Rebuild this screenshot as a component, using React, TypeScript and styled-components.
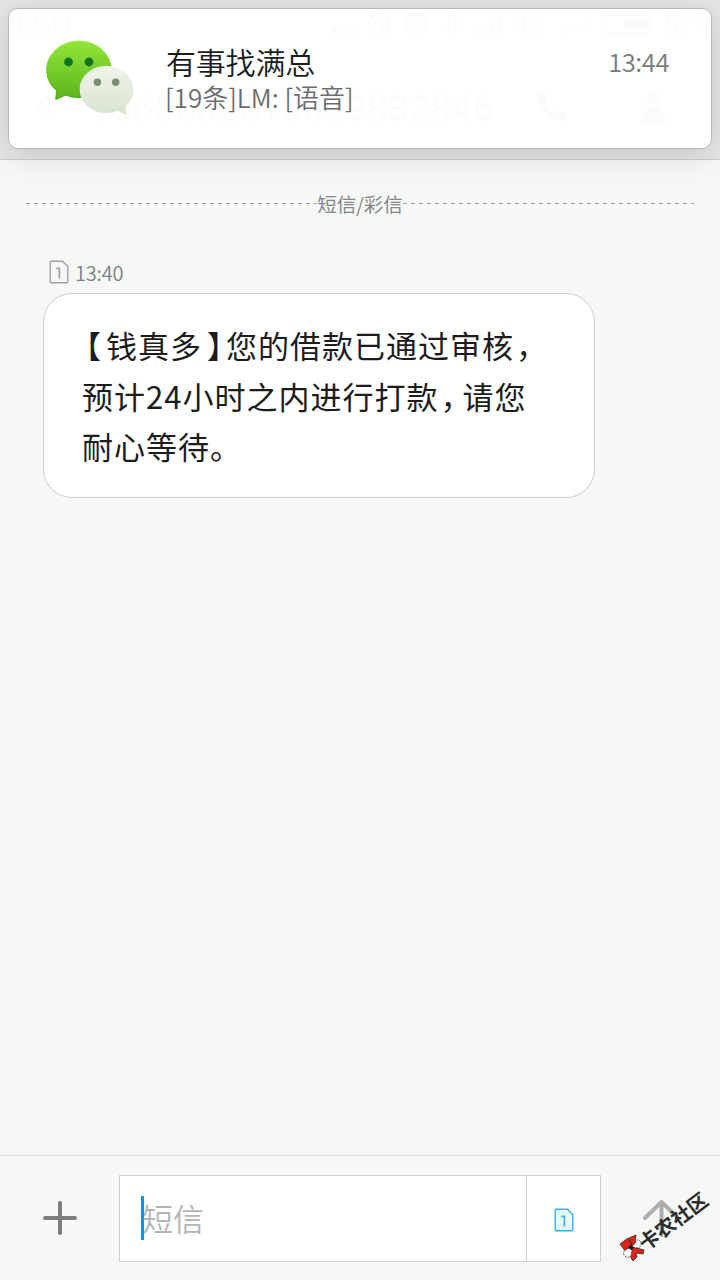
import React from "react";
import styled, { createGlobalStyle } from "styled-components";

const Global = createGlobalStyle`
  * { box-sizing: border-box; }
  body { margin: 0; background: #f6f8f8; }
`;

const Screen = styled.main`
  position: relative;
  width: 720px;
  height: 1280px;
  display: flex;
  flex-direction: column;
  overflow: hidden;
  background: #f6f8f8;
  color: #1c1c1c;
  font-family: "Noto Sans CJK SC", sans-serif;
`;

const Header = styled.header`
  flex: none;
  height: 160px;
  display: flex;
  flex-direction: column;
  background: #e6e6e6;
  border-bottom: 1px solid #cbcbcb;
  color: #606060;
  font-family: Roboto, "Noto Sans CJK SC", sans-serif;
`;

const StatusBar = styled.div`
  height: 51px;
  padding: 0 10px 0 12px;
  display: flex;
  align-items: center;
  justify-content: space-between;
  font-size: 25px;
  font-weight: 300;
`;

const StatusIcons = styled.div`
  display: flex;
  align-items: center;
  gap: 11px;
`;

const TitleBar = styled.div`
  height: 109px;
  padding: 4px 53px 0 34px;
  display: flex;
  align-items: center;
`;

const Sender = styled.h1`
  flex: 1;
  margin: 5px 0 0 38px;
  font-size: 37px;
  line-height: 44px;
  font-weight: 300;
  letter-spacing: 0.75px;
`;

const TitleActions = styled.div`
  display: flex;
  gap: 74px;
`;

const Notification = styled.aside`
  position: absolute;
  top: 8px;
  left: 8px;
  width: 704px;
  height: 141px;
  display: flex;
  padding: 30px 42px 0 36px;
  border: 1px solid #b8b8b8;
  border-radius: 10px;
  background: rgba(255, 255, 255, 0.975);
  box-shadow: 0 5px 32px rgba(0, 0, 0, 0.15);
`;

const NotificationText = styled.div`
  flex: 1;
  margin-left: 32px;
`;

const NotificationTitle = styled.div`
  margin-top: 2px;
  font-size: 30px;
  line-height: 40px;
  letter-spacing: -0.2px;
  font-weight: 350;
`;

const NotificationBody = styled.div`
  margin: -3px 0 0 -1px;
  font-size: 26px;
  line-height: 38px;
  color: #6c6c6c;
  font-weight: 350;
  letter-spacing: 0;
`;

const NotificationTime = styled.time`
  margin-top: 4px;
  font-size: 25.5px;
  line-height: 36px;
  letter-spacing: -0.4px;
  color: #7c7c7c;
  font-weight: 350;
`;

const Thread = styled.section`
  flex: 1;
  padding: 29px 26px 0;
`;

const Divider = styled.div`
  display: flex;
  align-items: center;
  height: 30px;
  color: #858686;
  font-size: 19.5px;
  line-height: 30px;
  white-space: nowrap;
`;

const Dashes = styled.span`
  flex: 1;
  height: 1px;
  margin-bottom: 1px;
  background: repeating-linear-gradient(90deg, #a0a2a2 0 4px, transparent 4px 8px);
`;

const MessageMeta = styled.div`
  display: flex;
  align-items: center;
  gap: 6px;
  height: 30px;
  margin: 38px 0 0 23px;
  font-size: 20px;
  letter-spacing: -0.2px;
  font-weight: 350;
  color: #7d7e7e;
`;

const Bubble = styled.article`
  width: 552px;
  height: 205px;
  margin: 6px 0 0 17px;
  padding: 26.4px 38px;
  border: 1px solid #cdcfcf;
  border-radius: 29px;
  background: #fff;
`;

const Line = styled.div`
  height: 50.5px;
  line-height: 50px;
  font-size: 31px;
  letter-spacing: 1px;
  white-space: nowrap;
`;

const Mark = styled.span<{ $side: "left" | "right"; $inset?: number }>`
  display: inline-flex;
  justify-content: ${(p) => (p.$side === "left" ? "flex-end" : "flex-start")};
  width: 24px;
  height: 50px;
  padding-left: ${(p) => (p.$side === "right" ? p.$inset ?? 0 : 0)}px;
  padding-right: ${(p) => (p.$side === "left" ? p.$inset ?? 0 : 0)}px;
  vertical-align: top;
`;

const Composer = styled.footer`
  flex: none;
  height: 125px;
  display: flex;
  align-items: flex-start;
  padding-top: 19px;
  border-top: 1px solid #dadcdc;
`;

const IconButton = styled.button`
  flex: 1;
  height: 85px;
  padding: 0;
  border: 0;
  background: none;
  display: flex;
  align-items: center;
  justify-content: center;
`;

const Field = styled.div`
  display: flex;
  width: 482px;
  height: 87px;
  border: 1px solid #cfd1d1;
  background: #fff;
`;

const Input = styled.div`
  flex: 1;
  display: flex;
  align-items: center;
  padding: 0 0 2px 21px;
`;

const Caret = styled.span`
  width: 3px;
  height: 44px;
  margin-right: -2px;
  background: #0b93d5;
`;

const Placeholder = styled.span`
  font-size: 31px;
  line-height: 44px;
  color: #b4b4b4;
  font-weight: 350;
`;

const SimButton = styled.div`
  width: 74px;
  display: flex;
  align-items: center;
  justify-content: center;
  padding-top: 3px;
  border-left: 1px solid #cfd1d1;
`;

const Watermark = styled.div`
  position: absolute;
  left: 619px;
  top: 1234px;
  display: flex;
  align-items: center;
`;

const WatermarkText = styled.span`
  position: absolute;
  left: 22px;
  top: 0;
  font-size: 20px;
  line-height: 22px;
  font-weight: 700;
  white-space: nowrap;
  color: #2b2b2b;
  transform-origin: 0 50%;
  transform: rotate(-37deg);
`;

function SimIcon({ color, fill }: { color: string; fill: string }) {
  return (
    <svg width="20" height="24" viewBox="0 0 20 24" fill="none">
      <path d="M2.2 1.2H13.5L18.8 6.5V21.3Q18.8 22.8 17.3 22.8H2.7Q1.2 22.8 1.2 21.3V2.2Q1.2 1.2 2.2 1.2Z" fill={fill} stroke={color} strokeWidth="1.4" />
      <path d="M7.3 8.3H10.4V18.4" stroke={color} strokeWidth="1.7" />
    </svg>
  );
}

function ChatLogo() {
  return (
    <svg width="89" height="78" viewBox="45 39 89 78">
      <defs>
        <linearGradient id="green" x1="0" y1="0" x2="0" y2="1">
          <stop offset="0" stopColor="#92e738" />
          <stop offset="1" stopColor="#5cb31d" />
        </linearGradient>
        <linearGradient id="rim" x1="0" y1="0" x2="0" y2="1">
          <stop offset="0" stopColor="#a9f35c" />
          <stop offset="0.5" stopColor="#6cc526" />
          <stop offset="1" stopColor="#36a50e" />
        </linearGradient>
        <linearGradient id="pale" x1="0" y1="0" x2="0" y2="1">
          <stop offset="0" stopColor="#f0f4eb" />
          <stop offset="1" stopColor="#d8e4cf" />
        </linearGradient>
      </defs>
      <path d="M79 41C97 41 111 54 111 69.500C111 85 97 97.500 79 97.500Q71.500 97.500 65.500 95L55.800 99.500L56.500 90.500C50 85 46.700 78 46.700 69.500C46.700 54 61 41 79 41Z" fill="url(#green)" stroke="url(#rim)" strokeWidth="1" />
      <path d="M106.500 66C121.500 66 133.400 76.500 133.400 89.500C133.400 96.500 130.500 101.500 125.800 106L126.200 115L117.500 111Q112.500 113 106.500 113C91.500 113 79.700 102.500 79.700 89.500C79.700 76.500 91.500 66 106.500 66Z" fill="url(#pale)" />
      <circle cx="68.500" cy="62" r="4.400" fill="#107522" />
      <circle cx="89" cy="62" r="4.400" fill="#107522" />
      <circle cx="97.400" cy="82.300" r="3.700" fill="#7d8d70" />
      <circle cx="115.700" cy="82.300" r="3.700" fill="#7d8d70" />
    </svg>
  );
}

function StatusGlyphs() {
  return (
    <svg width="173" height="26" viewBox="328 12 173 26" fill="none" stroke="#606060" strokeWidth="1.6">
      <g fill="#606060" stroke="none">
        <circle cx="332" cy="31" r="2.500" /><circle cx="341" cy="31" r="2.500" /><circle cx="350" cy="31" r="2.500" />
        <path d="M472 34v-3h2v3zM477 34v-6h2.500v6zM483 34v-9h2.500v9zM489 34v-13h2.500v13zM496 34v-18h4v18z" />
      </g>
      <circle cx="377" cy="24" r="10" /><path d="M373 31v-9a4 4 0 0 1 8 0v9" />
      <circle cx="414" cy="24" r="10" /><path d="M409 22l5 4 5-4M404 16l5-4M424 16l-5-4M447 15v18l-6-8M454 33v-18l6 8" />
    </svg>
  );
}

function SignalAndBattery() {
  return (
    <svg width="97" height="26" viewBox="557 12 97 26" fill="#606060">
      <path d="M560 34v-3h2v3zM566 34v-5h3v5zM573 34v-8h1v8zM580 34v-12h1v12zM586 34v-17h1v17z" />
      <rect x="601" y="15" width="52" height="18" rx="9" fill="none" stroke="#606060" strokeWidth="1.6" />
      <path d="M626 18h18q6 0 6 6t-6 6h-18z" />
    </svg>
  );
}

export default function App() {
  return (
    <>
      <Global />
      <Screen>
        <Header>
          <StatusBar>
            <span>13:44</span>
            <StatusIcons>
              <StatusGlyphs />
              <span>4G</span>
              <SignalAndBattery />
              <span>51%</span>
            </StatusIcons>
          </StatusBar>
          <TitleBar>
            <svg width="18" height="32" viewBox="0 0 18 32" fill="none" stroke="#606060" strokeWidth="2">
              <path d="M16 3L3 16l13 13" />
            </svg>
            <Sender>1065502510029882846</Sender>
            <TitleActions>
              <svg width="30" height="30" viewBox="0 0 30 30" fill="#606060">
                <path d="M2 1h6l2 8-3 4q3 6 9 8l4-3 9 3v7q-9 3-19-6Q-1 12 2 1Z" />
              </svg>
              <svg width="26" height="30" viewBox="0 0 26 30" fill="#606060">
                <circle cx="13" cy="7" r="7" />
                <path d="M1 30Q1 16 13 16T25 30Z" />
              </svg>
            </TitleActions>
          </TitleBar>
        </Header>

        <Thread>
          <Divider>
            <Dashes />
            <span>短信/彩信</span>
            <Dashes />
          </Divider>
          <MessageMeta>
            <SimIcon color="#9fa1a1" fill="none" />
            <span>13:40</span>
          </MessageMeta>
          <Bubble>
            <Line>
              <Mark $side="left" $inset={4}>【</Mark>钱真多<Mark $side="right" $inset={5}>】</Mark>您的借款已通过审核<Mark $side="right" $inset={2}>，</Mark>
            </Line>
            <Line>
              预计24小时之内进行打款<Mark $side="right" $inset={2}>，</Mark>请您
            </Line>
            <Line>耐心等待。</Line>
          </Bubble>
        </Thread>

        <Composer>
          <IconButton aria-label="添加">
            <svg width="36" height="36" viewBox="0 0 36 36" stroke="#7c7d7d" strokeWidth="4" strokeLinecap="round">
              <path d="M18 3V33M3 18H33" />
            </svg>
          </IconButton>
          <Field>
            <Input>
              <Caret />
              <Placeholder>短信</Placeholder>
            </Input>
            <SimButton>
              <SimIcon color="#31b2f2" fill="#eaf8ff" />
            </SimButton>
          </Field>
          <IconButton aria-label="发送">
            <svg width="40" height="40" viewBox="0 0 40 40" fill="none" stroke="#acadad" strokeWidth="4" strokeLinecap="round" strokeLinejoin="round">
              <path d="M4 20L20.500 4L37 20M20.500 5V37" />
            </svg>
          </IconButton>
        </Composer>

        <Notification>
          <ChatLogo />
          <NotificationText>
            <NotificationTitle>有事找满总</NotificationTitle>
            <NotificationBody>[19条]LM: [语音]</NotificationBody>
          </NotificationText>
          <NotificationTime>13:44</NotificationTime>
        </Notification>

        <Watermark>
          <svg width="27" height="28" viewBox="0 0 27 28" stroke="#171717" strokeWidth="0.7">
            <path d="M1 10L9 4L13 11L6 17Z" fill="#e2231a" />
            <path d="M10 4L17 1L16 9L13 12Z" fill="#e2231a" />
            <path d="M14 13L25 16L24 20L17 19L18 23L14 27L11 22Z" fill="#e2231a" />
            <path d="M16 9Q18 4 21 7Q24 12 19 14L13 13Z" fill="#fff" strokeDasharray="2 1" />
            <path d="M11 14Q3 16 5 21Q8 25 12 22L13 16Z" fill="#fff" strokeDasharray="2 1" />
            <path d="M9 13L12 11L15 14L12 16Z" fill="#171717" stroke="none" />
          </svg>
          <WatermarkText>卡农社区</WatermarkText>
        </Watermark>
      </Screen>
    </>
  );
}
